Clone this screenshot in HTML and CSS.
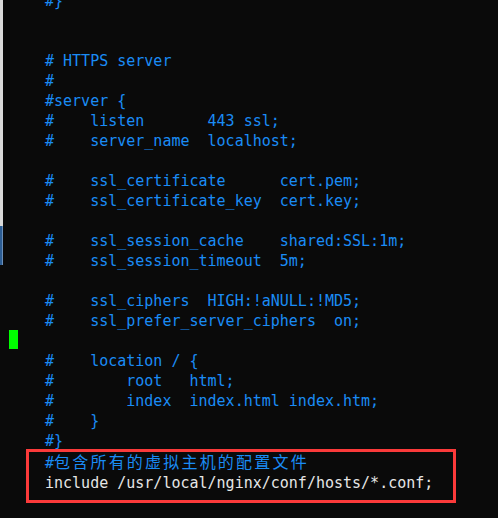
FILE: index.html
```html
<!DOCTYPE html>
<html>
<head>
<meta charset="utf-8">
<link rel="stylesheet" href="styles.css">
</head>
<body>
<div class="screen">
  <div class="edge">
    <div class="edge-light"></div>
    <div class="edge-blue"></div>
  </div>
  <div class="term">
<pre class="code">#}


# HTTPS server
#
#server {
#    listen       443 ssl;
#    server_name  localhost;

#    ssl_certificate      cert.pem;
#    ssl_certificate_key  cert.key;

#    ssl_session_cache    shared:SSL:1m;
#    ssl_session_timeout  5m;

#    ssl_ciphers  HIGH:!aNULL:!MD5;
#    ssl_prefer_server_ciphers  on;

#    location / {
#        root   html;
#        index  index.html index.htm;
#    }
#}
#<span class="cjk">包含所有的虚拟主机的配置文件</span>
<span class="plain">include /usr/local/nginx/conf/hosts/*.conf;</span></pre>
  </div>
  <div class="cursor"></div>
  <div class="highlight"></div>
</div>
</body>
</html>
```
FILE: styles.css
```css
html, body {
  margin: 0;
  padding: 0;
  background: #0a0a0a;
  overflow: hidden;
}
.screen {
  position: relative;
  display: flex;
  width: 498px;
  height: 518px;
  overflow: hidden;
  background: #0a0a0a;
}
.edge {
  display: flex;
  flex-direction: column;
  width: 3px;
  flex: none;
}
.edge-light {
  height: 226px;
  background: #d9d9d9;
}
.edge-blue {
  height: 39px;
  background: #2c5d94;
  box-shadow: inset -1px 0 0 #6b8fb8;
}
.term {
  padding-left: 42px;
}
.code {
  margin: -9px 0 0 0;
  font-family: "DejaVu Sans Mono", "Liberation Mono", monospace;
  font-size: 15px;
  line-height: 20px;
  color: #1a8cf5;
}
.cjk {
  font-family: "Noto Sans CJK SC", sans-serif;
  font-size: 16px;
  line-height: 20px;
  letter-spacing: 2.2px;
}
.plain {
  color: #e6e6e6;
}
.cursor {
  position: absolute;
  left: 9px;
  top: 330px;
  width: 9px;
  height: 19px;
  background: #00ff00;
}
.highlight {
  position: absolute;
  left: 26px;
  top: 449px;
  width: 424px;
  height: 48px;
  border: 3px solid #fb3a3a;
}
```
